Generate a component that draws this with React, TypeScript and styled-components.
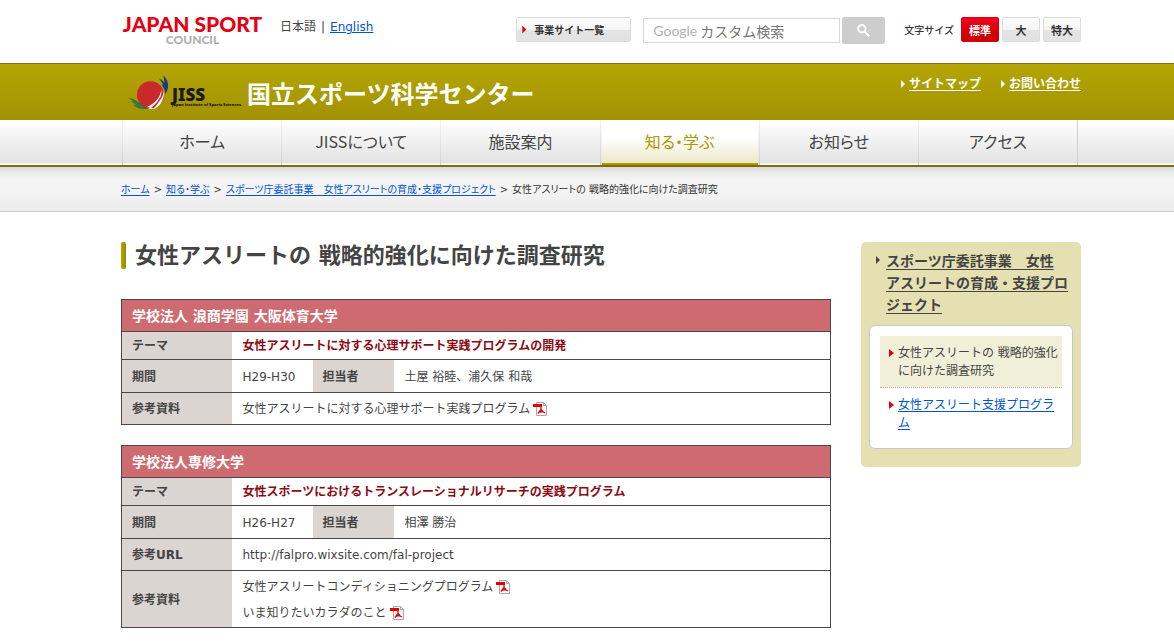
import React from "react";
import styled, { createGlobalStyle, css } from "styled-components";

const c = {
  text: "#444444",
  link: "#0055cc",
  red: "#e60012",
  olive: "#a89a00",
  line: "#4f464b",
};

const Global = createGlobalStyle`
  *, *::before, *::after { box-sizing: border-box; }
  body {
    margin: 0;
    background: #fff;
    color: ${c.text};
    font: 12px/18px "DejaVu Sans", "Noto Sans CJK JP", sans-serif;
  }
  a { color: ${c.link}; }
  h1, h2, p, ul, ol { margin: 0; padding: 0; }
  ul, ol { list-style: none; }
`;

const Band = styled.div`
  padding-left: 28px;
`;

const Inner = styled.div`
  max-width: 960px;
  margin: 0 auto;
`;

const Arrow = styled.span<{ $color: string }>`
  flex: none;
  width: 4px;
  height: 8px;
  background: ${(p) => p.$color};
  clip-path: polygon(0 0, 100% 50%, 0 100%);
`;

/* Header */

const HeaderRow = styled(Inner)`
  display: flex;
  align-items: flex-start;
  height: 63px;
`;

const Brand = styled.a`
  display: block;
  margin-top: 12px;
  width: 143px;
  font-family: Lato, sans-serif;
  font-weight: 900;
  text-align: center;
  text-decoration: none;
  white-space: nowrap;
`;

const BrandName = styled.span`
  display: block;
  color: ${c.red};
  font-size: 21px;
  line-height: 23px;
`;

const BrandSub = styled.span`
  display: block;
  color: #b0b0b0;
  font-size: 12px;
  line-height: 10px;
`;

const Languages = styled.p`
  display: flex;
  gap: 5px;
  flex: 1;
  margin: 18px 0 0 16px;
`;

const Tools = styled.div`
  display: flex;
  align-items: flex-start;
  padding-top: 17px;
`;

const glossy = css`
  border: 1px solid #dcdcdc;
  border-radius: 2px;
  background: linear-gradient(#fdfdfd, #f4f4f4 52%, #e4e4e4 53%, #e2e2e2);
  color: #333;
`;

const SitesButton = styled.button`
  ${glossy}
  display: flex;
  align-items: center;
  gap: 8px;
  width: 115px;
  height: 25px;
  padding: 0 5px;
  margin-right: 12px;
  font: bold 10px/16px "Noto Sans CJK JP", sans-serif;
`;

const Search = styled.form`
  display: flex;
  gap: 2px;
  margin-right: 19px;
`;

const SearchField = styled.label`
  display: flex;
  align-items: center;
  gap: 3px;
  width: 197px;
  height: 25px;
  margin-top: 1px;
  padding: 0 9px;
  border: 1px solid #d6d6d6;
`;

const Google = styled.span`
  color: #b0b0b0;
  font: 14px/20px Lato, sans-serif;
`;

const SearchInput = styled.input`
  flex: 1;
  min-width: 0;
  padding: 0;
  border: 0;
  outline: 0;
  background: none;
  color: #666;
  font: 14px/20px "Noto Sans CJK JP", sans-serif;
  &::placeholder { color: #757575; opacity: 1; }
`;

const SearchButton = styled.button`
  display: grid;
  place-items: center;
  width: 43px;
  height: 27px;
  padding: 0;
  border: 0;
  border-radius: 2px;
  background: #cdcdcd;
`;

const SizeGroup = styled.div`
  display: flex;
  gap: 3px;
`;

const SizeLabel = styled.span`
  margin-right: 4px;
  color: #333;
  font: 500 10px/25px "Noto Sans CJK JP", sans-serif;
`;

const SizeButton = styled.button<{ $active?: boolean }>`
  ${glossy}
  width: 38px;
  height: 25px;
  padding: 0;
  font: bold 11px/16px "Noto Sans CJK JP", sans-serif;
  ${(p) =>
    p.$active &&
    css`
      border-color: #d8000f;
      background: linear-gradient(#f50020, #d40000 60%, #cc0000);
      color: #fff;
    `}
`;

/* Site title band */

const TitleBand = styled(Band)`
  border-top: 1px solid #7f7420;
  background: linear-gradient(#b3a604, #a39104);
`;

const TitleRow = styled(Inner)`
  display: flex;
  justify-content: space-between;
  height: 56px;
`;

const SiteTitle = styled.a`
  display: flex;
  align-items: flex-start;
  gap: 5px;
  margin-left: 7px;
  padding-top: 11px;
  color: #fff;
  font: bold 24px/36px "Noto Sans CJK JP", sans-serif;
  text-decoration: none;
  white-space: nowrap;
`;

const UtilityLinks = styled.ul`
  display: flex;
  gap: 20px;
  padding-top: 11px;
`;

const UtilityItem = styled.li`
  display: flex;
  align-items: center;
  gap: 4px;
  height: 18px;
  font-weight: bold;
  a { color: #fff; text-underline-offset: 2px; }
`;

/* Global navigation */

const NavBand = styled(Band)`
  border-bottom: 2px solid #7d6f08;
  background: linear-gradient(#fff, #e2e2e2 43px, #fff 44px);
`;

const NavList = styled.ul`
  display: grid;
  grid-template-columns: repeat(6, 1fr);
  height: 45px;
  margin: 0 3px 0 1px;
  border-right: 1px solid #d0d0d0;
`;

const NavItem = styled.li<{ $active?: boolean }>`
  padding: 0 1px;
  border-left: 1px solid;
  border-image: linear-gradient(#f4f4f4, #cfcfcf) 1;
  a {
    display: block;
    height: 45px;
    color: ${c.text};
    font: 16px/42px "Noto Sans CJK JP", sans-serif;
    font-feature-settings: "palt";
    text-align: center;
    text-decoration: none;
    ${(p) =>
      p.$active &&
      css`
        border-bottom: 2px solid ${c.olive};
        background: linear-gradient(#fff 40%, #ece8c8);
        color: ${c.olive};
      `}
  }
`;

const CrumbBand = styled(Band)`
  border-bottom: 1px solid #cfcfcf;
  background: linear-gradient(#dadada, #ececec 6px, #f4f4f4 14px, #f4f4f4 24px, #ebebeb);
`;

const Crumbs = styled(Inner)`
  display: flex;
  gap: 4px;
  padding: 14px 0 12px;
  font-size: 10px;
  font-feature-settings: "palt";
  color: #333;
  white-space: nowrap;
  a { text-underline-offset: 2px; }
`;

/* Body */

const Columns = styled(Inner)`
  display: flex;
  align-items: flex-start;
  gap: 30px;
  padding: 30px 0 14px;
`;

const Main = styled.main`
  flex: 1;
  min-width: 0;
`;

const PageTitle = styled.h1`
  display: flex;
  gap: 9px;
  margin-bottom: 30px;
  font-size: 22px;
  line-height: 27px;
  &::before {
    content: "";
    width: 5px;
    border-radius: 2px;
    background: linear-gradient(90deg, #b5a800, #948700);
  }
`;

const DataTable = styled.table`
  width: 100%;
  margin-bottom: 20px;
  table-layout: fixed;
  border-collapse: collapse;
  border: 1px solid ${c.line};
`;

const LabelCol = styled.col`
  width: 110px;
`;

const NarrowCol = styled.col`
  width: 81px;
`;

const Row = styled.tr<{ $height: number }>`
  height: ${(p) => p.$height}px;
  border-top: 1px solid ${c.line};
`;

const School = styled.th`
  padding: 0 10px;
  background: #ce6b70;
  color: #fff;
  font-size: 14px;
  text-align: left;
`;

const Label = styled.th`
  padding: 1px 10px 0;
  background: #dad5d0;
  text-align: left;
`;

const Value = styled.td<{ $theme?: boolean }>`
  padding: 1px 11px 0;
  line-height: 26px;
  ${(p) => p.$theme && css`color: #8b0a14; font-weight: bold;`}
`;

const Doc = styled.div`
  display: flex;
  align-items: center;
  gap: 3px;
`;

/* Side menu */

const Side = styled.aside`
  flex: none;
  width: 220px;
  padding: 8px 8px 18px;
  border-radius: 5px;
  background: #e5e0b2;
`;

const SideHeading = styled.h2`
  display: flex;
  gap: 6px;
  margin: 0 0 9px 7px;
  font-size: 14px;
  line-height: 22px;
  ${Arrow} { margin-top: 6px; }
  a { color: ${c.text}; text-underline-offset: 3px; }
`;

const SideList = styled.ul`
  padding: 10px 10px 9px;
  border: 1px solid #c8c8c8;
  border-radius: 6px;
  background: #fff;
`;

const SideItem = styled.li<{ $current?: boolean }>`
  display: flex;
  gap: 4px;
  padding: 8px 4px 7px 9px;
  ${(p) => p.$current && css`
    background: #f2efd9;
    border-bottom: 1px dotted #b0b0b0;
  `}
  ${Arrow} { margin-top: 5px; width: 5px; }
  a { text-underline-offset: 2px; }
`;

const JissLogo = () => (
  <svg width="114" height="36" viewBox="0 0 114 36" aria-hidden="true">
    <path d="M0 22.500c4 1 9 3 13 6.500l8 4.500c-8 1.500-13-.5-16-4l3 .3-5-3.800 2 .2z" fill="#2c7d3c" />
    <circle cx="22.500" cy="19.800" r="13.600" fill="#c9282d" />
    <path d="M36 13c0 10-6 17-16 21l7-.5c6-3 10-10 9-20.500z" fill="#fff" />
    <path d="M33.500 14c-1 8-6 14-14.500 18l4 1c7-4 11-10 10.500-19z" fill="#fff" />
    <path d="M23 33c5-4 8-8 10-13-1 5-3 9-7 13z" fill="#c9282d" />
    <path d="M29.500 2c3 2 5 3 7 6l-1-7.500c4 4 5 8 4.500 12-.5 3-2 5-3 7 0-5-1-7-4-10l2 .5c-1-3-2-4-4-6l3 1z" fill="#153f82" />
    <text x="44" y="26" fontFamily="Noto Sans" fontWeight="900" fontSize="17" fill="#1b1b1b">JISS</text>
    <text x="44" y="31" fontFamily="Open Sans" fontWeight="800" fontSize="4" fill="#1b1b1b">
      Japan Institute of Sports Sciences
    </text>
  </svg>
);

const SearchIcon = () => (
  <svg width="13" height="13" viewBox="0 0 13 13" fill="none" stroke="#fff" strokeWidth="2" aria-hidden="true">
    <circle cx="4.800" cy="4.800" r="3.700" />
    <path d="M7.500 7.500l4.700 4.700" />
  </svg>
);

const PdfIcon = () => (
  <svg width="14" height="14" viewBox="0 0 14 14" aria-label="PDF" role="img">
    <path d="M3.500.5h7l3 3v10h-10z" fill="#fff" stroke="#a8a8a8" />
    <path d="M10.500.5v3h3" fill="none" stroke="#a8a8a8" />
    <path d="M0 2h9v3H0z" fill="#e60000" />
    <path d="M8 5v2.500L5 11.500M8 7.500l1.500 2 2.500 1.500M6 10l4-.5" fill="none" stroke="#e60000" strokeWidth="1.300" />
  </svg>
);

type Project = {
  school: string;
  theme: string;
  period: string;
  person: string;
  url?: string;
  docs: string[];
};

const projects: Project[] = [
  {
    school: "学校法人 浪商学園 大阪体育大学",
    theme: "女性アスリートに対する心理サポート実践プログラムの開発",
    period: "H29-H30",
    person: "土屋 裕睦、浦久保 和哉",
    docs: ["女性アスリートに対する心理サポート実践プログラム"],
  },
  {
    school: "学校法人専修大学",
    theme: "女性スポーツにおけるトランスレーショナルリサーチの実践プログラム",
    period: "H26-H27",
    person: "相澤 勝治",
    url: "http://falpro.wixsite.com/fal-project",
    docs: ["女性アスリートコンディショニングプログラム", "いま知りたいカラダのこと"],
  },
];

const navItems = ["ホーム", "JISSについて", "施設案内", "知る・学ぶ", "お知らせ", "アクセス"];

const ProjectTable = ({ project }: { project: Project }) => (
  <DataTable>
    <colgroup>
      <LabelCol />
      <NarrowCol />
      <NarrowCol />
      <col />
    </colgroup>
    <tbody>
      <Row $height={32}>
        <School colSpan={4}>{project.school}</School>
      </Row>
      <Row $height={28}>
        <Label scope="row">テーマ</Label>
        <Value colSpan={3} $theme>{project.theme}</Value>
      </Row>
      <Row $height={33}>
        <Label scope="row">期間</Label>
        <Value>{project.period}</Value>
        <Label scope="row">担当者</Label>
        <Value>{project.person}</Value>
      </Row>
      {project.url && (
        <Row $height={32}>
          <Label scope="row">参考URL</Label>
          <Value colSpan={3}>{project.url}</Value>
        </Row>
      )}
      <Row $height={project.docs.length > 1 ? 57 : 32}>
        <Label scope="row">参考資料</Label>
        <Value colSpan={3}>
          {project.docs.map((doc) => (
            <Doc key={doc}>
              {doc}
              <PdfIcon />
            </Doc>
          ))}
        </Value>
      </Row>
    </tbody>
  </DataTable>
);

export default function App() {
  return (
    <>
      <Global />
      <header>
        <Band>
          <HeaderRow>
            <Brand href="#">
              <BrandName>JAPAN SPORT</BrandName>
              <BrandSub>COUNCIL</BrandSub>
            </Brand>
            <Languages>
              <span>日本語</span>
              <span>|</span>
              <a href="#">English</a>
            </Languages>
            <Tools>
              <SitesButton type="button">
                <Arrow $color={c.red} />
                事業サイト一覧
              </SitesButton>
              <Search>
                <SearchField>
                  <Google>Google</Google>
                  <SearchInput type="text" placeholder="カスタム検索" />
                </SearchField>
                <SearchButton type="button" aria-label="検索">
                  <SearchIcon />
                </SearchButton>
              </Search>
              <SizeGroup>
                <SizeLabel>文字サイズ</SizeLabel>
                <SizeButton type="button" $active>標準</SizeButton>
                <SizeButton type="button">大</SizeButton>
                <SizeButton type="button">特大</SizeButton>
              </SizeGroup>
            </Tools>
          </HeaderRow>
        </Band>
        <TitleBand>
          <TitleRow>
            <SiteTitle href="#">
              <JissLogo />
              国立スポーツ科学センター
            </SiteTitle>
            <UtilityLinks>
              {["サイトマップ", "お問い合わせ"].map((label) => (
                <UtilityItem key={label}>
                  <Arrow $color="#fff" />
                  <a href="#">{label}</a>
                </UtilityItem>
              ))}
            </UtilityLinks>
          </TitleRow>
        </TitleBand>
        <NavBand as="nav">
          <Inner>
            <NavList>
              {navItems.map((label) => (
                <NavItem key={label} $active={label === "知る・学ぶ"}>
                  <a href="#">{label}</a>
                </NavItem>
              ))}
            </NavList>
          </Inner>
        </NavBand>
      </header>
      <CrumbBand>
        <Crumbs>
          <a href="#">ホーム</a>
          <span>&gt;</span>
          <a href="#">知る・学ぶ</a>
          <span>&gt;</span>
          <a href="#">スポーツ庁委託事業　女性アスリートの育成・支援プロジェクト</a>
          <span>&gt;</span>
          <span>女性アスリートの 戦略的強化に向けた調査研究</span>
        </Crumbs>
      </CrumbBand>
      <Band>
        <Columns>
          <Main>
            <PageTitle>女性アスリートの 戦略的強化に向けた調査研究</PageTitle>
            {projects.map((project) => (
              <ProjectTable key={project.school} project={project} />
            ))}
          </Main>
          <Side>
            <SideHeading>
              <Arrow $color={c.text} />
              <a href="#">
                スポーツ庁委託事業　女性
                <br />
                アスリートの育成・支援プロジェクト
              </a>
            </SideHeading>
            <SideList>
              <SideItem $current>
                <Arrow $color={c.red} />
                <span>女性アスリートの 戦略的強化に向けた調査研究</span>
              </SideItem>
              <SideItem>
                <Arrow $color={c.red} />
                <a href="#">女性アスリート支援プログラム</a>
              </SideItem>
            </SideList>
          </Side>
        </Columns>
      </Band>
    </>
  );
}
